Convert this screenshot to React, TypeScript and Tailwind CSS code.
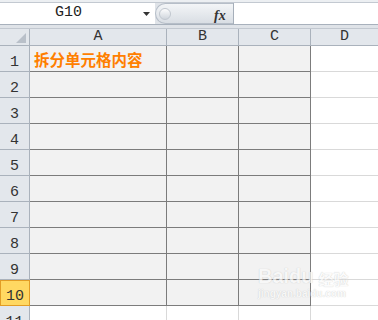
import React from "react";

const rows = [1, 2, 3, 4, 5, 6, 7, 8, 9, 10];

function RowHead({ n, active }: { n: number; active?: boolean }) {
  return (
    <div
      className={
        active
          ? "w-[30px] shrink-0 h-full flex items-end justify-center pb-[1px] bg-[#ffd862] border border-[#e29d25] box-border"
          : "w-[30px] shrink-0 h-full flex items-end justify-center pb-[1px] bg-[#e3e7ec] border-r border-b border-[#aab2bc]"
      }
    >
      <span className="text-[15px] leading-none text-[#333]">{n}</span>
    </div>
  );
}

export default function App() {
  return (
    <div className="w-[378px] h-[320px] overflow-hidden bg-white relative font-['Liberation_Mono',monospace]">
      {/* formula bar */}
      <div className="h-[28px] flex flex-col bg-[#dfe3e8]">
        <div className="h-[3px] bg-[#eceff2] border-b border-[#c3c9d1]" />
        <div className="h-[21px] flex">
          <div className="w-[155px] bg-white relative flex items-center">
            <span className="ml-[55px] text-[15px] text-[#222]">G10</span>
            <svg className="absolute left-[143px] top-[9px]" width="7" height="4" viewBox="0 0 7 4">
              <path d="M0 0h7L3.5 4z" fill="#333" />
            </svg>
          </div>
          <div className="w-[78px] flex items-center rounded-l-full bg-gradient-to-b from-[#f3f5f7] to-[#d9dee4] border border-r-0 border-[#b6bec8] relative">
            <div className="ml-[3px] w-[12px] h-[12px] rounded-full bg-gradient-to-b from-[#fdfdfd] to-[#cfd5dc] border border-[#c1c7cf]" />
            <span className="absolute left-[58px] top-[1px] font-['Liberation_Serif',serif] italic font-bold text-[14px] text-[#333]">
              fx
            </span>
          </div>
          <div className="flex-1 bg-white border-l border-[#a6afba]" />
        </div>
        <div className="h-[1px] bg-[#a8b1bc]" />
      </div>

      {/* column headers */}
      <div className="h-[18px] flex bg-[#e3e7ec] border-t border-[#c2c8d0]">
        <div className="w-[30px] shrink-0 border-r border-b border-[#aab2bc] relative">
          <svg className="absolute left-[16px] top-[4px]" width="10" height="10" viewBox="0 0 10 10">
            <path d="M10 0v10H0z" fill="#b9c0c9" />
          </svg>
        </div>
        <div className="w-[137px] shrink-0 border-r border-b border-[#aab2bc] flex items-center justify-center text-[15px] text-[#333]">A</div>
        <div className="w-[72px] shrink-0 border-r border-b border-[#aab2bc] flex items-center justify-center text-[15px] text-[#333]">B</div>
        <div className="w-[72px] shrink-0 border-r border-b border-[#aab2bc] flex items-center justify-center text-[15px] text-[#333]">C</div>
        <div className="flex-1 border-b border-[#aab2bc] flex items-center justify-center text-[15px] text-[#333]">D</div>
      </div>

      {/* data rows */}
      {rows.map((n) => (
        <div key={n} className="h-[26px] flex">
          <RowHead n={n} active={n === 10} />
          <div className="w-[137px] shrink-0 bg-[#f2f2f2] border-r border-b border-[#7c7c7c] flex items-center pl-[4px] pt-[2px]">
            {n === 1 && (
              <span className="font-['Noto_Sans_CJK_SC',sans-serif] font-bold text-[15.5px] leading-none text-[#ff7f00]">
                拆分单元格内容
              </span>
            )}
          </div>
          <div className="w-[72px] shrink-0 bg-[#f2f2f2] border-r border-b border-[#7c7c7c]" />
          <div className="w-[72px] shrink-0 bg-[#f2f2f2] border-r border-b border-[#7c7c7c]" />
          <div className="flex-1 border-b border-[#d9d9d9]" />
        </div>
      ))}
      <div className="h-[26px] flex">
        <RowHead n={11} />
        <div className="w-[137px] shrink-0 border-r border-[#d9d9d9]" />
        <div className="w-[72px] shrink-0 border-r border-[#d9d9d9]" />
        <div className="w-[72px] shrink-0 border-r border-[#d9d9d9]" />
        <div className="flex-1" />
      </div>

      {/* watermark */}
      <div className="absolute left-[258px] top-[266px] flex flex-col items-start text-[#fafafa] [text-shadow:0_0_1px_#b0b0b0] opacity-70 pointer-events-none">
        <div className="flex items-end gap-[5px] leading-none">
          <span className="font-['Liberation_Sans',sans-serif] font-bold text-[20px]">Baidu</span>
          <span className="font-['Noto_Sans_CJK_SC',sans-serif] font-bold text-[15px]">经验</span>
        </div>
        <span className="mt-[3px] font-['Liberation_Sans',sans-serif] font-bold text-[10px] leading-none">jingyan.baidu.com</span>
      </div>
    </div>
  );
}
